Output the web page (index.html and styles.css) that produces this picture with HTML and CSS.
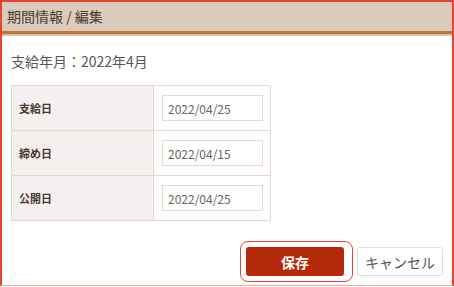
FILE: index.html
```html
<!DOCTYPE html>
<html>
<head>
  <meta charset="utf-8">
  <title>期間情報 / 編集</title>
  <link rel="stylesheet" href="styles.css">
</head>
<body>
  <div class="dialog">
    <div class="dialog-header">期間情報 / 編集</div>
    <div class="dialog-body">
      <p class="month">支給年月：2022年4月</p>
      <table class="period-table">
        <tr>
          <th>支給日</th>
          <td><input type="text" class="date-input" value="2022/04/25"></td>
        </tr>
        <tr>
          <th>締め日</th>
          <td><input type="text" class="date-input" value="2022/04/15"></td>
        </tr>
        <tr>
          <th>公開日</th>
          <td><input type="text" class="date-input" value="2022/04/25"></td>
        </tr>
      </table>
    </div>
    <div class="button-group">
      <span class="focus-ring"><button class="button button-save">保存</button></span>
      <button class="button button-cancel">キャンセル</button>
    </div>
  </div>
</body>
</html>
```

FILE: styles.css
```css
* {
  box-sizing: border-box;
}
body {
  margin: 0;
  font-family: "Noto Sans CJK JP", "Noto Sans", sans-serif;
  color: #555;
  background: #fff;
}
.dialog {
  width: 454px;
  height: 286px;
  border: 2px solid #e8452f;
  border-bottom: 1px solid #f0a899;
  display: flex;
  flex-direction: column;
}
.dialog-header {
  height: 34px;
  padding: 0 5px;
  background: #dccbbc;
  border-bottom: 1px solid #e6c8a6;
  box-shadow: inset 0 -1px 0 #d2b9a6, inset 0 -4px 0 #b9773b;
  font-size: 14px;
  line-height: 29px;
  color: #4b3b33;
  padding-bottom: 4px;
}
.dialog-body {
  padding: 0 9px;
}
.month {
  margin: 15px 0 14px;
  font-size: 14px;
  line-height: 20px;
  color: #555;
}
.period-table {
  width: 260px;
  border-collapse: collapse;
}
.period-table th,
.period-table td {
  height: 45px;
  border: 1px solid #e6d8ce;
  padding: 0;
}
.period-table th {
  width: 142px;
  padding-left: 7px;
  background: #f4f0f0;
  text-align: left;
  font-size: 11px;
  font-weight: bold;
  color: #4a362c;
}
.period-table td {
  padding-left: 8px;
}
.date-input {
  width: 101px;
  height: 26px;
  padding: 0 5px;
  border: 1px solid #e8d9cf;
  font-family: "Noto Sans CJK JP", "Noto Sans", sans-serif;
  font-size: 12px;
  color: #666;
  outline: none;
}
.button-group {
  display: flex;
  justify-content: flex-end;
  align-items: center;
  margin-top: 20px;
  padding-right: 9px;
}
.focus-ring {
  display: inline-flex;
  padding: 5px 8px 5px 5px;
  border: 1px solid #e8452f;
  border-radius: 8px;
}
.button {
  height: 29px;
  font-family: "Noto Sans CJK JP", "Noto Sans", sans-serif;
  font-size: 14px;
  border-radius: 3px;
  cursor: pointer;
}
.button-save {
  width: 98px;
  background-color: #b5290b;
  border: none;
  color: #fff;
  font-weight: bold;
}
.button-cancel {
  width: 86px;
  margin-left: 4px;
  background-color: #fff;
  border: 1px solid #ddd;
  color: #555;
}
```
